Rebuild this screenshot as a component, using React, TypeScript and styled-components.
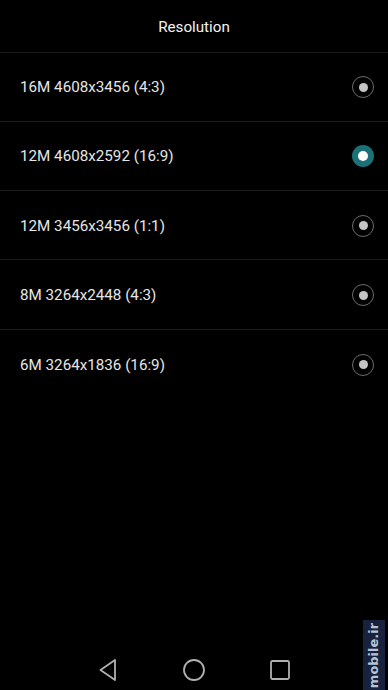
import React, { useState } from "react";
import styled, { createGlobalStyle } from "styled-components";

const Global = createGlobalStyle`
  html, body { margin: 0; padding: 0; background: #000; }
  body { font-family: Roboto, "Noto Sans", sans-serif; }
  #root { height: 690px; }
`;

const Screen = styled.div`
  width: 388px;
  height: 690px;
  background: #000;
  display: flex;
  flex-direction: column;
  position: relative;
  overflow: hidden;
`;

const Header = styled.div`
  height: 52.5px;
  display: flex;
  align-items: center;
  justify-content: center;
  color: #f2f2f2;
  font-size: 15.2px;
  border-bottom: 1px solid #1c1c1c;
  box-sizing: border-box;
  padding-top: 2px;
`;

const List = styled.div`
  display: flex;
  flex-direction: column;
  flex: 1;
`;

const Row = styled.div<{ $last?: boolean }>`
  height: 69.3px;
  box-sizing: border-box;
  display: flex;
  align-items: center;
  justify-content: space-between;
  padding: 1px 14px 0 20px;
  border-bottom: ${(p) => (p.$last ? "none" : "1px solid #1c1c1c")};
  color: #e6e6e6;
  font-size: 15.2px;
  cursor: pointer;
`;

const Radio = styled.span<{ $on: boolean }>`
  width: 22px;
  height: 22px;
  border-radius: 50%;
  box-sizing: border-box;
  display: flex;
  align-items: center;
  justify-content: center;
  border: ${(p) => (p.$on ? "none" : "1px solid #6c6c6c")};
  background: ${(p) => (p.$on ? "#1b7177" : "transparent")};
  &::after {
    content: "";
    width: ${(p) => (p.$on ? "10px" : "9px")};
    height: ${(p) => (p.$on ? "10px" : "9px")};
    border-radius: 50%;
    background: ${(p) => (p.$on ? "#ffffff" : "#c4c4c4")};
  }
`;

const NavBar = styled.div`
  height: 48px;
  display: flex;
  align-items: flex-end;
  justify-content: center;
  gap: 62px;
  padding-bottom: 8px;
  box-sizing: border-box;
`;

const NavButton = styled.span`
  width: 24px;
  height: 24px;
  display: flex;
  align-items: center;
  justify-content: center;
`;

const Watermark = styled.div`
  position: absolute;
  right: 3px;
  bottom: 0;
  width: 22px;
  height: 70px;
  background: #16223e;
  display: flex;
  align-items: center;
  justify-content: center;
`;

const WatermarkText = styled.span`
  transform: rotate(-90deg);
  white-space: nowrap;
  color: #b8c2d6;
  font-family: "DejaVu Sans", "Liberation Sans", sans-serif;
  font-weight: 700;
  font-size: 13px;
`;

const options = [
  "16M 4608x3456 (4:3)",
  "12M 4608x2592 (16:9)",
  "12M 3456x3456 (1:1)",
  "8M 3264x2448 (4:3)",
  "6M 3264x1836 (16:9)",
];

export default function App() {
  const [sel, setSel] = useState(1);
  return (
    <Screen>
      <Global />
      <Header>Resolution</Header>
      <List>
        {options.map((o, i) => (
          <Row key={o} $last={i === options.length - 1} onClick={() => setSel(i)}>
            <span>{o}</span>
            <Radio $on={sel === i} />
          </Row>
        ))}
      </List>
      <NavBar>
        <NavButton>
          <svg width="20" height="24" viewBox="0 0 20 24">
            <path d="M17 2 L2.5 12 L17 22 Z" fill="none" stroke="#b0b0b0" strokeWidth="1.8" strokeLinejoin="round" />
          </svg>
        </NavButton>
        <NavButton>
          <svg width="24" height="24" viewBox="0 0 24 24">
            <circle cx="12" cy="12" r="10" fill="none" stroke="#b0b0b0" strokeWidth="1.8" />
          </svg>
        </NavButton>
        <NavButton>
          <svg width="20" height="20" viewBox="0 0 20 20">
            <rect x="1" y="1" width="18" height="18" rx="1.5" fill="none" stroke="#b0b0b0" strokeWidth="1.8" />
          </svg>
        </NavButton>
      </NavBar>
      <Watermark>
        <WatermarkText>mobile.ir</WatermarkText>
      </Watermark>
    </Screen>
  );
}
